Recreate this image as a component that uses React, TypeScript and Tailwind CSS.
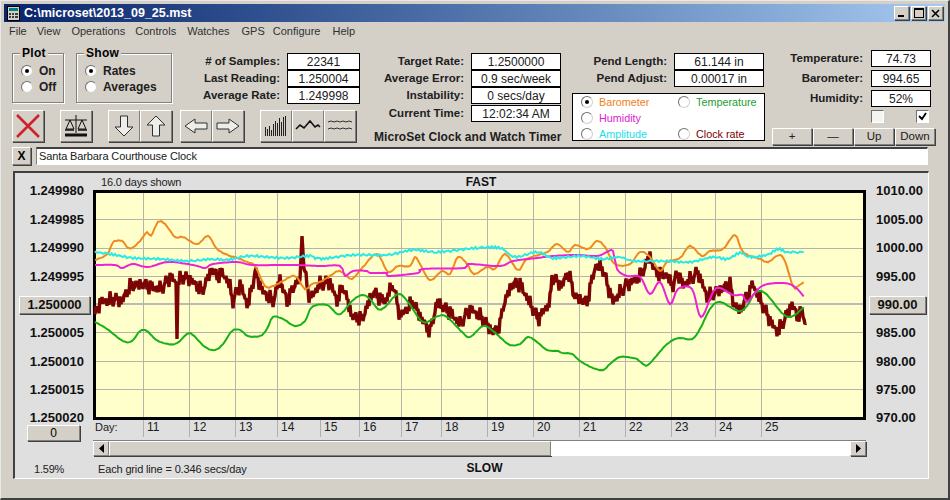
import React from "react";

type P = [number, number];
const orange: P[] = [[95,261],[103,258],[109,253],[113,243],[122,242],[127,248],[132,249],[140,242],[147,233],[151,237],[158,223],[165,225],[175,238],[183,238],[197,245],[208,237],[217,250],[230,257],[235,258],[247,263],[255,267],[265,287],[273,287],[283,282],[295,277],[305,290],[312,285],[320,283],[330,277],[338,272],[345,275],[352,280],[363,268],[377,255],[388,273],[398,267],[410,267],[415,258],[420,265],[430,281],[442,272],[450,275],[458,258],[467,265],[474,275],[487,268],[495,270],[505,255],[518,271],[527,260],[547,253],[557,245],[568,253],[575,246],[588,250],[597,242],[605,248],[615,265],[630,265],[640,253],[650,258],[660,272],[667,263],[680,259],[690,247],[702,257],[710,252],[723,250],[735,236],[743,253],[760,260],[768,263],[782,257],[793,287],[798,287],[805,282]];
const cyan: P[] = [[95,253],[110,255],[133,259],[160,260],[187,262],[213,260],[227,261],[247,257],[267,258],[287,259],[310,257],[320,260],[353,256],[387,256],[413,251],[437,253],[477,249],[500,249],[515,258],[537,253],[553,259],[580,257],[603,260],[620,258],[633,262],[663,262],[690,263],[713,258],[727,260],[740,254],[750,258],[767,256],[778,250],[787,253],[805,253]];
const magenta: P[] = [[95,266],[115,266],[122,269],[133,265],[148,268],[168,263],[193,266],[205,269],[213,265],[237,263],[253,266],[293,266],[320,267],[340,267],[345,277],[353,272],[367,272],[370,274],[387,274],[388,277],[418,274],[423,270],[465,269],[468,265],[500,267],[513,262],[537,259],[553,257],[577,256],[597,257],[607,253],[613,252],[617,270],[627,277],[640,278],[650,295],[660,283],[670,305],[678,290],[692,290],[701,318],[713,293],[720,289],[733,296],[743,296],[747,303],[762,287],[783,284],[795,288],[805,299]];
const green: P[] = [[95,323],[107,330],[123,342],[132,342],[140,332],[147,332],[158,342],[175,345],[187,335],[193,336],[205,348],[215,351],[223,345],[232,332],[240,331],[248,337],[260,337],[267,330],[273,318],[283,320],[295,327],[305,322],[312,308],[327,306],[337,315],[343,313],[352,302],[362,296],[370,300],[378,310],[385,308],[398,295],[408,303],[423,323],[438,317],[447,318],[462,333],[470,338],[483,327],[493,332],[502,340],[510,346],[520,345],[528,338],[537,343],[547,351],[558,352],[562,354],[572,355],[580,362],[593,369],[603,371],[610,365],[620,358],[633,359],[637,360],[643,365],[648,366],[658,355],[665,347],[673,341],[680,339],[692,340],[700,330],[710,310],[720,303],[738,312],[747,307],[755,294],[765,294],[783,315],[793,317],[805,307]];
const brownBase: P[] = [[95,317],[100,303],[115,300],[122,302],[130,287],[143,285],[157,290],[163,288],[170,278],[176,283],[177,340],[178,283],[182,278],[190,280],[202,292],[212,270],[217,277],[223,274],[230,287],[233,303],[240,285],[248,307],[255,273],[263,293],[273,302],[280,280],[287,303],[295,285],[300,280],[302,237],[304,270],[310,300],[320,285],[330,283],[337,302],[343,287],[352,317],[362,320],[373,293],[385,303],[393,285],[400,317],[413,303],[420,317],[430,333],[437,303],[450,313],[460,325],[470,310],[480,317],[493,333],[500,327],[503,307],[512,285],[520,285],[533,310],[538,320],[550,303],[552,278],[562,287],[568,273],[575,298],[587,303],[595,268],[602,268],[613,303],[625,287],[640,277],[650,257],[655,273],[667,277],[673,287],[678,273],[683,287],[698,273],[707,298],[730,285],[733,303],[740,312],[753,285],[758,297],[773,327],[778,333],[792,305],[797,317],[803,313],[806,328]];

// Catmull-Rom resample so the traces read as curves, with a little sensor noise
function smooth(a: P[], amp: number) {
  const out: string[] = [];
  for (let i = 0; i < a.length - 1; i++) {
    const p0 = a[Math.max(0, i - 1)];
    const p1 = a[i];
    const p2 = a[i + 1];
    const p3 = a[Math.min(a.length - 1, i + 2)];
    const steps = Math.max(2, Math.round((p2[0] - p1[0]) / 2));
    for (let s = 0; s < steps; s++) {
      const t = s / steps;
      const t2 = t * t;
      const t3 = t2 * t;
      const f = (k: 0 | 1) =>
        0.5 * (2 * p1[k] + (p2[k] - p0[k]) * t + (2 * p0[k] - 5 * p1[k] + 4 * p2[k] - p3[k]) * t2 + (3 * p1[k] - p0[k] - 3 * p2[k] + p3[k]) * t3);
      const x = f(0);
      const y = f(1) + Math.sin(x * 1.9) * amp;
      out.push(`${x.toFixed(1)},${y.toFixed(1)}`);
    }
  }
  return out.join(" ");
}

function brownPts() {
  const out: string[] = [];
  for (let x = 95; x <= 806; x++) {
    let i = 0;
    while (i < brownBase.length - 2 && brownBase[i + 1][0] < x) i++;
    const [x0, y0] = brownBase[i];
    const [x1, y1] = brownBase[i + 1];
    const y = y0 + ((y1 - y0) * (x - x0)) / (x1 - x0);
    const spike = Math.abs(x - 177) < 2 || Math.abs(x - 302) < 3;
    const n = spike ? 0 : ((x % 2) * 2 - 1) * 3 + ((x % 5) - 2) * 1.6 + Math.sin(x * 0.9) * 2.5;
    out.push(`${x},${(y + n).toFixed(1)}`);
  }
  return out.join(" ");
}

const raised = "bg-[#d4d0c8] border border-t-white border-l-white border-r-[#808080] border-b-[#808080] shadow-[1px_1px_0_#404040]";
const hGrid = [220, 249, 277, 333, 362, 390];
const vGrid = [143, 189, 235, 277, 359, 401, 441, 487, 533, 579, 625, 671, 715, 761];
const days = [11, 12, 13, 14, 15, 16, 17, 18, 19, 20, 21, 22, 23, 24, 25];
const dayX = [143, 189, 235, 277, 320, 359, 401, 441, 487, 533, 579, 625, 671, 715, 761];

function Radio({ on }: { on?: boolean }) {
  return (
    <span className="flex h-[12px] w-[12px] shrink-0 items-center justify-center rounded-full border border-t-[#707070] border-l-[#707070] border-r-[#d4d0c8] border-b-[#d4d0c8] bg-white">
      {on && <span className="h-[4px] w-[4px] rounded-full bg-black" />}
    </span>
  );
}

function Opt({ on, label }: { on?: boolean; label: string }) {
  return (
    <div className="flex h-[16px] items-center gap-[6px] font-bold text-[#202020]">
      <Radio on={on} />
      <span>{label}</span>
    </div>
  );
}

function Group({ title, cls, children }: { title: string; cls: string; children: React.ReactNode }) {
  return (
    <div className={`relative h-[50px] border border-[#808080] shadow-[1px_1px_0_white,inset_1px_1px_0_white] pl-[8px] pt-[9px] ${cls}`}>
      <span className="absolute left-[7px] top-[-8px] bg-[#d4d0c8] px-[2px] text-[12px] font-bold leading-[14px] tracking-[0.3px]">{title}</span>
      {children}
    </div>
  );
}

function Field({ label, value, labelW, w, rowCls = "" }: { label: string; value: string; labelW: string; w: string; rowCls?: string }) {
  return (
    <div className={`flex h-[17px] items-center ${rowCls}`}>
      <span className={`${labelW} shrink-0 whitespace-nowrap text-right text-[11.5px] font-bold text-[#202020]`}>{label}</span>
      <span className={`ml-[7px] ${w} flex h-[17px] shrink-0 items-center justify-center border border-black bg-white text-[12px] text-[#202020]`}>{value}</span>
    </div>
  );
}

function Tool({ children, cls = "" }: { children: React.ReactNode; cls?: string }) {
  return <button className={`flex h-[32px] w-[32px] items-center justify-center ${raised} ${cls}`}>{children}</button>;
}

function Leg({ on, label, color }: { on?: boolean; label: string; color: string }) {
  return (
    <div className="flex h-[16px] items-center gap-[6px]">
      <Radio on={on} />
      <span className={`text-[10.8px] ${color}`}>{label}</span>
    </div>
  );
}

const leftLabels = ["1.249980", "1.249985", "1.249990", "1.249995", "", "1.250005", "1.250010", "1.250015"];
const rightLabels = ["1010.00", "1005.00", "1000.00", "995.00", "", "985.00", "980.00", "975.00"];

export default function App() {
  const brown = brownPts();
  return (
    <div className="h-[500px] w-[950px] overflow-hidden border-b-2 border-r-2 border-t border-l border-b-[#404040] border-r-[#404040] border-t-[#e8e8e8] border-l-[#e8e8e8] bg-[#d4d0c8] pl-[3px] pt-[3px] font-['Liberation_Sans',sans-serif] text-[12px] text-black">
      {/* title bar */}
      <div className="flex h-[18px] w-[941px] items-center bg-gradient-to-r from-[#0a246a] to-[#a6caf0] pl-[3px] pr-[2px]">
        <svg width="13" height="15" viewBox="0 0 13 15" className="mr-[4px]">
          <rect x="0.5" y="0.5" width="12" height="14" fill="#d4d0c8" stroke="#000" />
          <rect x="2" y="2" width="9" height="3" fill="#008080" />
          <path d="M2 7h2v2H2zM5 7h2v2H5zM8 7h3v2H8zM2 10h2v2H2zM5 10h2v2H5zM8 10h3v2H8z" fill="#404040" />
        </svg>
        <span className="text-[12.5px] font-bold text-white">C:\microset\2013_09_25.mst</span>
        <div className="ml-auto flex gap-[2px]">
          <button className={`flex h-[14px] w-[15px] items-end justify-center pb-[2px] pr-[2px] ${raised}`}><span className="h-[2px] w-[6px] bg-black" /></button>
          <button className={`flex h-[14px] w-[15px] items-center justify-center ${raised}`}><span className="h-[10px] w-[10px] border border-t-2 border-black" /></button>
          <button className={`flex h-[14px] w-[15px] items-center justify-center ${raised}`}>
            <svg width="9" height="9" viewBox="0 0 9 9"><path d="M1 1l7 7M8 1l-7 7" stroke="#000" strokeWidth="1.6" /></svg>
          </button>
        </div>
      </div>

      {/* menu */}
      <div className="flex h-[18px] items-center text-[11px] text-[#303030]">
        <span className="ml-[5px]">File</span>
        <span className="ml-[10px]">View</span>
        <span className="ml-[11px]">Operations</span>
        <span className="ml-[10px]">Controls</span>
        <span className="ml-[11px]">Watches</span>
        <span className="ml-[12px]">GPS</span>
        <span className="ml-[8px]">Configure</span>
        <span className="ml-[12px]">Help</span>
      </div>

      {/* controls */}
      <div className="flex h-[107px] pl-[8px] pt-[10px]">
        <div className="w-[348px] shrink-0 pt-[3px]">
          <div className="flex h-[51px]">
            <Group title="Plot" cls="w-[52px]">
              <Opt on label="On" />
              <Opt label="Off" />
            </Group>
            <Group title="Show" cls="ml-[12px] w-[96px]">
              <Opt on label="Rates" />
              <Opt label="Averages" />
            </Group>
            <div className="flex flex-col">
              <Field label="# of Samples:" value="22341" labelW="w-[108px]" w="w-[73px]" />
              <Field label="Last Reading:" value="1.250004" labelW="w-[108px]" w="w-[73px]" />
              <Field label="Average Rate:" value="1.249998" labelW="w-[108px]" w="w-[73px]" />
            </div>
          </div>
          <div className="mt-[6px] flex">
            <Tool>
              <svg width="28" height="28" viewBox="0 0 28 28"><path d="M3 3l22 22M25 3L3 25" stroke="#d0202c" strokeWidth="2.6" /></svg>
            </Tool>
            <Tool cls="ml-[16px]">
              <svg width="26" height="24" viewBox="0 0 26 24" fill="none" stroke="#101010">
                <path d="M2 6h22M13 1v18M7 6L3 15h8zM19 6l-4 9h8z" />
                <path d="M2 16h9M15 16h9" strokeWidth="1.4" />
                <path d="M2 21h22" strokeWidth="3" />
              </svg>
            </Tool>
            <Tool cls="ml-[16px]">
              <svg width="22" height="24" viewBox="0 0 22 24"><path d="M7.5 2h7v11H20L11 22 2 13h5.5z" fill="#ededea" stroke="#303030" /></svg>
            </Tool>
            <Tool>
              <svg width="22" height="24" viewBox="0 0 22 24"><path d="M7.5 22h7V11H20L11 2 2 11h5.5z" fill="#ededea" stroke="#303030" /></svg>
            </Tool>
            <Tool cls="ml-[8px]">
              <svg width="26" height="18" viewBox="0 0 26 18"><path d="M2 9l10-7v4h12v6H12v4z" fill="#ededea" stroke="#303030" /></svg>
            </Tool>
            <Tool>
              <svg width="26" height="18" viewBox="0 0 26 18"><path d="M24 9l-10-7v4H2v6h12v4z" fill="#ededea" stroke="#303030" /></svg>
            </Tool>
            <Tool cls="ml-[16px]">
              <svg width="24" height="24" viewBox="0 0 24 24" stroke="#202020">
                <path d="M1.5 22v-9M3.5 22v-7M5.5 22v-10M7.5 22v-6M9.5 22v-12M11.5 22V7M13.5 22V9M15.5 22V4M17.5 22V8M19.5 22V3M21.5 22V2" />
              </svg>
            </Tool>
            <Tool>
              <svg width="26" height="14" viewBox="0 0 26 14" fill="none"><path d="M1 10l4-4 4 3 6-7 5 6 3-2 2 2" stroke="#101010" strokeWidth="1.6" /></svg>
            </Tool>
            <Tool>
              <svg width="26" height="14" viewBox="0 0 26 14" fill="none" stroke="#303030"><path d="M1 3l3-1 3 1 3-1 3 1 3-1 3 1 3-1 3 1M1 10l3-1 3 1 3-1 3 1 3-1 3 1 3-1 3 1" /></svg>
            </Tool>
          </div>
        </div>

        <div className="w-[201px] shrink-0 pt-[3px]">
          <Field label="Target Rate:" value="1.2500000" labelW="w-[104px]" w="w-[90px]" />
          <Field label="Average Error:" value="0.9 sec/week" labelW="w-[104px]" w="w-[90px]" />
          <Field label="Instability:" value="0 secs/day" labelW="w-[104px]" w="w-[90px]" />
          <Field label="Current Time:" value="12:02:34 AM" labelW="w-[104px]" w="w-[90px]" rowCls="mt-[1px]" />
          <div className="mt-[7px] whitespace-nowrap pl-[14px] text-[12px] font-bold leading-[16px] tracking-[0.05px] text-[#202020]">MicroSet Clock and Watch Timer</div>
        </div>

        <div className="ml-[11px] w-[193px] shrink-0 pt-[3px]">
          <Field label="Pend Length:" value="61.144 in" labelW="w-[95px]" w="w-[90px]" />
          <Field label="Pend Adjust:" value="0.00017 in" labelW="w-[95px]" w="w-[90px]" />
          <div className="mt-[6px] grid h-[48px] w-[193px] grid-cols-[97px_1fr] content-start border border-black bg-white pl-[8px]">
            <Leg on label="Barometer" color="text-[#f08020]" />
            <Leg label="Temperature" color="text-[#20a030]" />
            <Leg label="Humidity" color="text-[#e020d0]" />
            <span />
            <Leg label="Amplitude" color="text-[#20e0e8]" />
            <Leg label="Clock rate" color="text-[#7b0000]" />
          </div>
        </div>

        <div className="ml-[7px] w-[164px] shrink-0">
          <div className="flex flex-col gap-[3px]">
            <Field label="Temperature:" value="74.73" labelW="w-[91px]" w="ml-[8px] w-[60px]" />
            <Field label="Barometer:" value="994.65" labelW="w-[91px]" w="ml-[8px] w-[60px]" />
            <Field label="Humidity:" value="52%" labelW="w-[91px]" w="ml-[8px] w-[60px]" />
          </div>
          <div className="mt-[3px] flex pl-[99px]">
            <span className="h-[13px] w-[13px] border border-t-[#707070] border-l-[#707070] border-r-white border-b-white bg-[#f4f4f0]" />
            <span className="ml-[32px] flex h-[13px] w-[13px] items-center justify-center border border-t-[#707070] border-l-[#707070] border-r-white border-b-white bg-white">
              <svg width="9" height="9" viewBox="0 0 9 9"><path d="M1 4l3 3 4-6" fill="none" stroke="#000" strokeWidth="1.8" /></svg>
            </span>
          </div>
          <div className="mt-[5px] flex gap-[1px]">
            {["+", "—", "Up", "Down"].map((t) => (
              <button key={t} className={`flex h-[17px] w-[40px] items-center justify-center text-[11.5px] text-[#202020] ${raised}`}>{t}</button>
            ))}
          </div>
        </div>
      </div>

      {/* description */}
      <div className="flex h-[18px] pl-[8px]">
        <button className={`flex h-[18px] w-[19px] items-center justify-center text-[12px] font-bold ${raised}`}>X</button>
        <div className="ml-[5px] flex h-[18px] w-[892px] items-center border-t-2 border-l border-t-[#404040] border-l-[#808080] border-b border-r border-b-white border-r-white bg-white pl-[2px] text-[11px] tracking-[-0.12px] text-[#202020]">Santa Barbara Courthouse Clock</div>
      </div>

      {/* chart panel */}
      <div className="ml-[9px] mt-[6px] flex h-[308px] w-[916px] border-t-2 border-l-2 border-b border-r border-t-[#404040] border-l-[#404040] border-b-white border-r-white bg-[#dfdfdf]">
        <div className="w-[78px] shrink-0 pt-[4px]">
          {leftLabels.map((l, i) => (
            <div key={i} className="flex h-[28.375px] items-center justify-end pr-[9px] text-[13px] font-bold text-[#101010]">
              {l || (
                <button className={`-mr-[6px] flex h-[18px] w-[71px] items-center justify-center text-[13px] font-bold ${raised}`}>1.250000</button>
              )}
            </div>
          ))}
          <div className="flex h-[21px] items-end justify-end pr-[9px] text-[13px] font-bold leading-[14px] text-[#101010]">1.250020</div>
          <button className={`ml-[12px] flex h-[16px] w-[53px] items-center justify-center text-[12px] ${raised}`}>0</button>
          <div className="ml-[19px] mt-[21px] text-[11px] leading-[14px] tracking-[-0.2px] text-[#202020]">1.59%</div>
        </div>

        <div className="w-[773px] shrink-0">
          <div className="grid h-[17px] grid-cols-[1fr_auto_1fr] items-center">
            <span className="pl-[8px] text-[11px] tracking-[-0.15px] text-[#202020]">16.0 days shown</span>
            <span className="pl-[3px] text-[12px] font-bold text-[#101010]">FAST</span>
            <span />
          </div>
          <svg width="773" height="230" viewBox="93 191 773 230" className="block">
            <rect x="94.5" y="192.5" width="770" height="227" fill="#ffffcc" stroke="#000" strokeWidth="3" />
            {hGrid.map((y) => (
              <line key={y} x1="96" x2="863" y1={y + 0.5} y2={y + 0.5} stroke="#b4b4a8" />
            ))}
            <line x1="96" x2="863" y1="305" y2="305" stroke="#bcbcb4" strokeWidth="2" />
            {vGrid.map((x) => (
              <line key={x} x1={x + 0.5} x2={x + 0.5} y1="194" y2="418" stroke="#b4b4a8" />
            ))}
            <polyline points={brown} fill="none" stroke="#7b0404" strokeWidth="3.4" strokeLinejoin="bevel" />
            <polyline points={smooth(green, 0.2)} fill="none" stroke="#18b018" strokeWidth="2" />
            <polyline points={smooth(orange, 0.3)} fill="none" stroke="#f08a20" strokeWidth="2" />
            <polyline points={smooth(magenta, 0)} fill="none" stroke="#ee20d8" strokeWidth="2" />
            <polyline points={smooth(cyan, 1)} fill="none" stroke="#28e8e8" strokeWidth="2" />
          </svg>
          <div className="relative h-[17px] text-[12px] leading-[15px] text-[#202020]">
            <span className="pl-[2px] text-[11px]">Day:</span>
            {days.map((d, i) => (
              <span key={d} className="absolute top-0 h-[17px] border-l border-[#b0b0b0] pl-[3px]" style={{ left: dayX[i] - 93 }}>{d}</span>
            ))}
          </div>
          <div className="mt-[3px] flex h-[16px] border-t border-t-[#808080] border-b border-b-[#606060]">
            <button className={`flex h-[15px] w-[16px] shrink-0 items-center justify-center ${raised}`}>
              <svg width="5" height="9" viewBox="0 0 5 9"><path d="M5 0v9L0 4.5z" fill="#000" /></svg>
            </button>
            <div className={`h-[15px] w-[442px] shrink-0 ${raised}`} />
            <div className="h-[15px] flex-1 bg-white" />
            <button className={`flex h-[15px] w-[16px] shrink-0 items-center justify-center ${raised}`}>
              <svg width="5" height="9" viewBox="0 0 5 9"><path d="M0 0v9l5-4.5z" fill="#000" /></svg>
            </button>
          </div>
          <div className="grid h-[24px] grid-cols-[1fr_auto_1fr] items-center">
            <span className="pl-[5px] pt-[2px] text-[11px] tracking-[-0.15px] text-[#202020]">Each grid line = 0.346 secs/day</span>
            <span className="pl-[10px] text-[12px] font-bold text-[#101010]">SLOW</span>
            <span />
          </div>
        </div>

        <div className="flex-1 pt-[4px]">
          {rightLabels.map((l, i) => (
            <div key={i} className="flex h-[28.375px] items-center pl-[10px] text-[13px] font-bold text-[#101010]">
              {l || (
                <button className={`-ml-[7px] flex h-[18px] w-[57px] items-center justify-center text-[13px] font-bold ${raised}`}>990.00</button>
              )}
            </div>
          ))}
          <div className="flex h-[21px] items-end pl-[10px] text-[13px] font-bold leading-[14px] text-[#101010]">970.00</div>
        </div>
      </div>
    </div>
  );
}
